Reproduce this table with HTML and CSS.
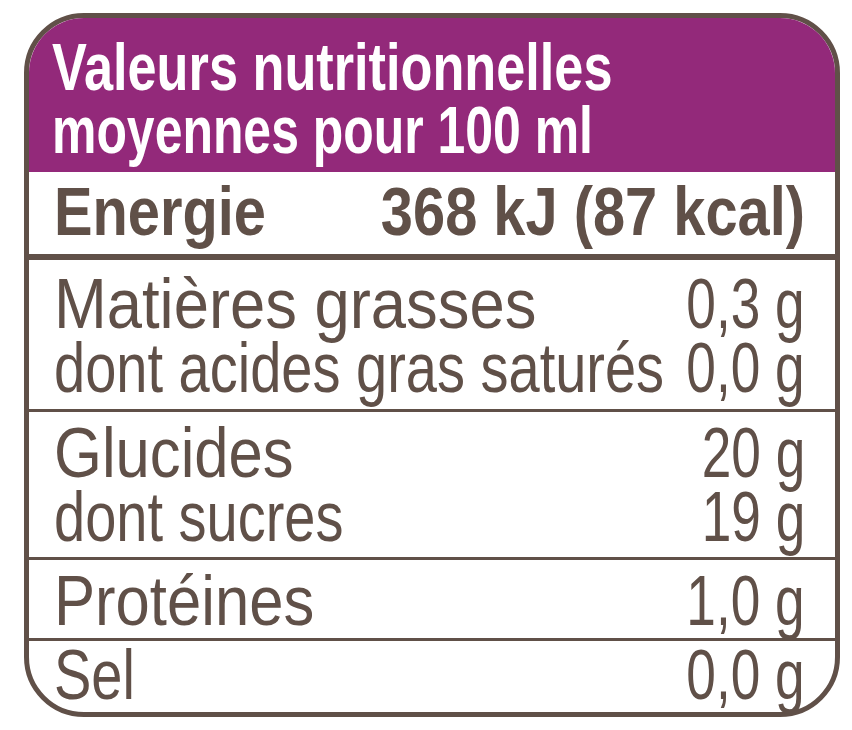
FILE: index.html
```html
<!DOCTYPE html>
<html lang="fr">
<head>
<meta charset="utf-8">
<title>Valeurs nutritionnelles</title>
<link rel="stylesheet" href="styles.css">
</head>
<body>
<div class="label">
  <div class="head">
    <h1 class="title"><span class="t1">Valeurs nutritionnelles</span><span class="t2">moyennes pour 100 ml</span></h1>
  </div>
  <div class="row energy">
    <div class="line"><span class="name">Energie</span><span class="val">368 kJ (87 kcal)</span></div>
  </div>
  <div class="row fat">
    <div class="line"><span class="name wide">Matières grasses</span><span class="val">0,3 g</span></div>
    <div class="line sub"><span class="name">dont acides gras saturés</span><span class="val">0,0 g</span></div>
  </div>
  <div class="row carbs">
    <div class="line"><span class="name">Glucides</span><span class="val">20 g</span></div>
    <div class="line sub"><span class="name">dont sucres</span><span class="val">19 g</span></div>
  </div>
  <div class="row prot">
    <div class="line"><span class="name">Protéines</span><span class="val">1,0 g</span></div>
  </div>
  <div class="row salt">
    <div class="line"><span class="name short">Sel</span><span class="val">0,0 g</span></div>
  </div>
</div>
</body>
</html>
```
FILE: styles.css
```css
html, body {
  margin: 0;
  padding: 0;
  background: #ffffff;
}

body {
  padding: 13px 0 0 24px;
  font-family: "Liberation Sans", Arial, sans-serif;
  color: #605048;
}

.label {
  width: 816px;
  box-sizing: border-box;
  border: 5px solid #605048;
  border-radius: 60px;
  background: #ffffff;
}

.head {
  background: #93297a;
  border-radius: 55px 55px 0 0;
  padding: 17px 0 11px 23px;
}

.title {
  margin: 0;
  font-size: 67px;
  line-height: 63px;
  font-weight: 700;
  color: #ffffff;
  white-space: nowrap;
}

.t1,
.t2 {
  display: block;
  width: max-content;
  transform-origin: left center;
}

.t1 {
  transform: scaleX(0.78);
}

.t2 {
  transform: scaleX(0.745);
}

.row {
  padding: 0 30px 0 25px;
  border-bottom: 3px solid #605048;
}

.line {
  display: flex;
  align-items: baseline;
  font-size: 70px;
  line-height: 64px;
  white-space: nowrap;
}

.name {
  flex: 0 1 auto;
  min-width: 0;
  transform-origin: left center;
  transform: scaleX(0.88);
}

.name.wide {
  transform: scaleX(0.905);
}

.sub .name,
.name.short {
  transform: scaleX(0.8);
}

.val {
  flex: 0 0 auto;
  margin-left: auto;
  transform-origin: right center;
  transform: scaleX(0.76);
}

.energy {
  border-bottom-width: 6px;
  padding-top: 5px;
  padding-bottom: 9px;
}

.energy .line {
  font-size: 68px;
  line-height: 68px;
  font-weight: 700;
}

.energy .name {
  transform: scaleX(0.85);
}

.energy .val {
  transform: scaleX(0.85);
}

.fat {
  padding-top: 12px;
  padding-bottom: 9px;
}

.carbs {
  padding-top: 9px;
  padding-bottom: 8px;
}

.prot {
  padding-top: 9px;
  padding-bottom: 5px;
}

.salt {
  border-bottom: none;
  padding-top: 2px;
  padding-bottom: 5px;
}
```
